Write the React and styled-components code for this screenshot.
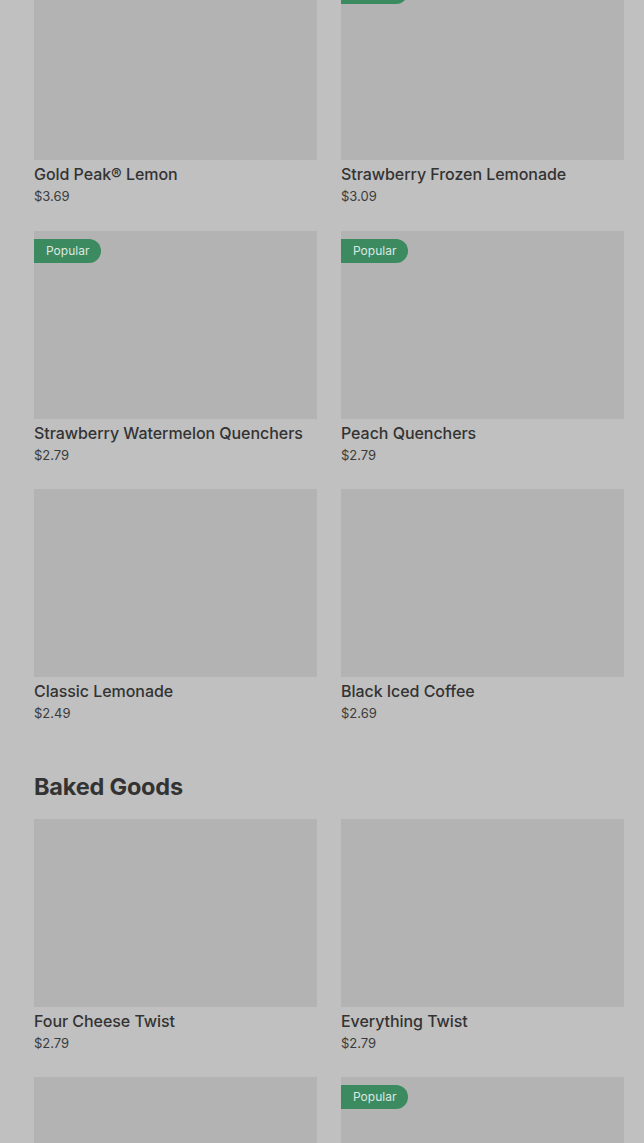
import React from "react";
import styled, {createGlobalStyle} from "styled-components";

const GlobalStyle = createGlobalStyle`
  html, body {
    margin: 0;
    padding: 0;
    background-color: #c0c0c0;
    overflow: hidden;
  }
`;

const Page = styled.div`
  height: 1143px;
  overflow: hidden;
  background-color: #c0c0c0;
  font-family: Inter, "Noto Sans", sans-serif;
`;

const Content = styled.div`
  margin-top: -28px;
  padding: 0 20px 0 34px;
`;

const Section = styled.section`
  margin-bottom: 16px;
`;

const SectionTitle = styled.h2`
  margin: 0;
  padding: 32px 0 17px;
  font-size: 23.5px;
  font-weight: 700;
  letter-spacing: -0.2px;
  line-height: 30px;
  color: #333333;
`;

const Grid = styled.div`
  display: grid;
  grid-template-columns: 1fr 1fr;
  column-gap: 24px;
  row-gap: 24px;
`;

const Card = styled.div`
  display: flex;
  flex-direction: column;
`;

const Thumb = styled.div`
  position: relative;
  height: 188px;
  background-color: #b3b3b3;
`;

const Badge = styled.span`
  position: absolute;
  top: 8px;
  left: 0;
  height: 24px;
  padding: 0 12px;
  display: flex;
  align-items: center;
  background-color: #3c8a5f;
  color: #dce8e1;
  font-size: 12px;
  line-height: 24px;
  border-radius: 0 12px 12px 0;
`;

const Name = styled.div`
  margin-top: 2px;
  font-size: 16px;
  font-weight: 500;
  letter-spacing: -0.05px;
  line-height: 24px;
  color: #333333;
`;

const Price = styled.div`
  font-size: 13px;
  line-height: 20.5px;
  color: #3b3b3b;
`;

const drinks = [
  {name: "Gold Peak® Lemon", price: "$3.69", popular: false},
  {name: "Strawberry Frozen Lemonade", price: "$3.09", popular: true},
  {name: "Strawberry Watermelon Quenchers", price: "$2.79", popular: true},
  {name: "Peach Quenchers", price: "$2.79", popular: true},
  {name: "Classic Lemonade", price: "$2.49", popular: false},
  {name: "Black Iced Coffee", price: "$2.69", popular: false}
];

const baked = [
  {name: "Four Cheese Twist", price: "$2.79", popular: false},
  {name: "Everything Twist", price: "$2.79", popular: false},
  {name: "Cinnamon Sugar Twist", price: "$2.79", popular: false},
  {name: "Pretzel Bites", price: "$3.29", popular: true}
];

const Item = ({item}) => (
  <Card>
    <Thumb>{item.popular && <Badge>Popular</Badge>}</Thumb>
    <Name>{item.name}</Name>
    <Price>{item.price}</Price>
  </Card>
);

export default function App() {
  return (
    <Page>
      <GlobalStyle/>
      <Content>
        <Section>
          <Grid>
            {drinks.map((item) => (
              <Item key={item.name} item={item}/>
            ))}
          </Grid>
        </Section>
        <Section>
          <SectionTitle>Baked Goods</SectionTitle>
          <Grid>
            {baked.map((item) => (
              <Item key={item.name} item={item}/>
            ))}
          </Grid>
        </Section>
      </Content>
    </Page>
  );
}
